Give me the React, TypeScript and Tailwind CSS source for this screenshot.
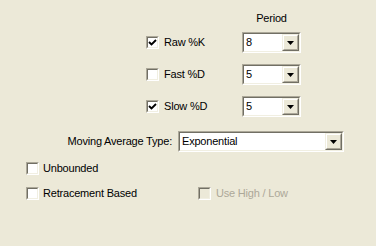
import React from "react";

function CheckBox({ checked = false, disabled = false }: { checked?: boolean; disabled?: boolean }) {
  return (
    <div className="w-[13px] h-[13px] shrink-0 border border-t-[#ACA899] border-l-[#ACA899] border-b-white border-r-white">
      <div
        className={
          "w-full h-full border border-t-[#716F64] border-l-[#716F64] border-b-[#F1EFE2] border-r-[#F1EFE2] flex items-center justify-center " +
          (disabled ? "bg-[#ECE9D8]" : "bg-white")
        }
      >
        {checked && (
          <svg width="9" height="9" viewBox="0 0 9 9" className="block">
            <path d="M1 4 L3.5 6.5 L8 2" fill="none" stroke="#000" strokeWidth="1.9" />
          </svg>
        )}
      </div>
    </div>
  );
}

function Combo({ value, width }: { value: string; width: string }) {
  return (
    <div className={"h-[21px] border border-t-[#ACA899] border-l-[#ACA899] border-b-white border-r-white " + width}>
      <div className="h-full border border-t-[#716F64] border-l-[#716F64] border-b-[#F1EFE2] border-r-[#F1EFE2] bg-white flex items-stretch">
        <div className="flex-1 pl-[2px] leading-[17px]">{value}</div>
        <div className="w-[17px] border border-t-[#F1EFE2] border-l-[#F1EFE2] border-b-[#716F64] border-r-[#716F64]">
          <div className="h-full border border-t-white border-l-white border-b-[#ACA899] border-r-[#ACA899] bg-[#ECE9D8] flex items-center justify-center">
            <svg width="7" height="4" viewBox="0 0 7 4" className="block">
              <path d="M0 0 H7 L3.5 4 Z" fill="#000" />
            </svg>
          </div>
        </div>
      </div>
    </div>
  );
}

function Row({ label, checked, value }: { label: string; checked: boolean; value: string }) {
  return (
    <>
      <div className="flex items-center gap-[5px] h-[21px]">
        <CheckBox checked={checked} />
        <span>{label}</span>
      </div>
      <Combo value={value} width="w-[59px]" />
    </>
  );
}

export default function App() {
  return (
    <div className="w-[376px] h-[246px] bg-[#ECE9D8] text-black text-[11px] leading-[13px] tracking-[-0.2px] font-['Liberation_Sans',Arial,sans-serif] overflow-hidden">
      <div className="pl-[146px] pt-[12px]">
        <div className="grid grid-cols-[96px_59px] gap-y-[11px]">
          <div />
          <div className="text-center h-[13px] -mb-[4px]">Period</div>
          <Row label="Raw %K" checked value="8" />
          <Row label="Fast %D" checked={false} value="5" />
          <Row label="Slow %D" checked value="5" />
        </div>
      </div>
      <div className="flex items-center justify-end pr-[32px] gap-[6px] mt-[14px]">
        <span>Moving Average Type:</span>
        <Combo value="Exponential" width="w-[166px]" />
      </div>
      <div className="pl-[26px] mt-[10px] flex flex-col gap-[12px]">
        <div className="flex items-center gap-[4px]">
          <CheckBox />
          <span>Unbounded</span>
        </div>
        <div className="flex items-center">
          <div className="flex items-center gap-[4px] w-[172px]">
            <CheckBox />
            <span>Retracement Based</span>
          </div>
          <div className="flex items-center gap-[5px]">
            <CheckBox disabled />
            <span className="text-[#ACA899]">Use High / Low</span>
          </div>
        </div>
      </div>
    </div>
  );
}
